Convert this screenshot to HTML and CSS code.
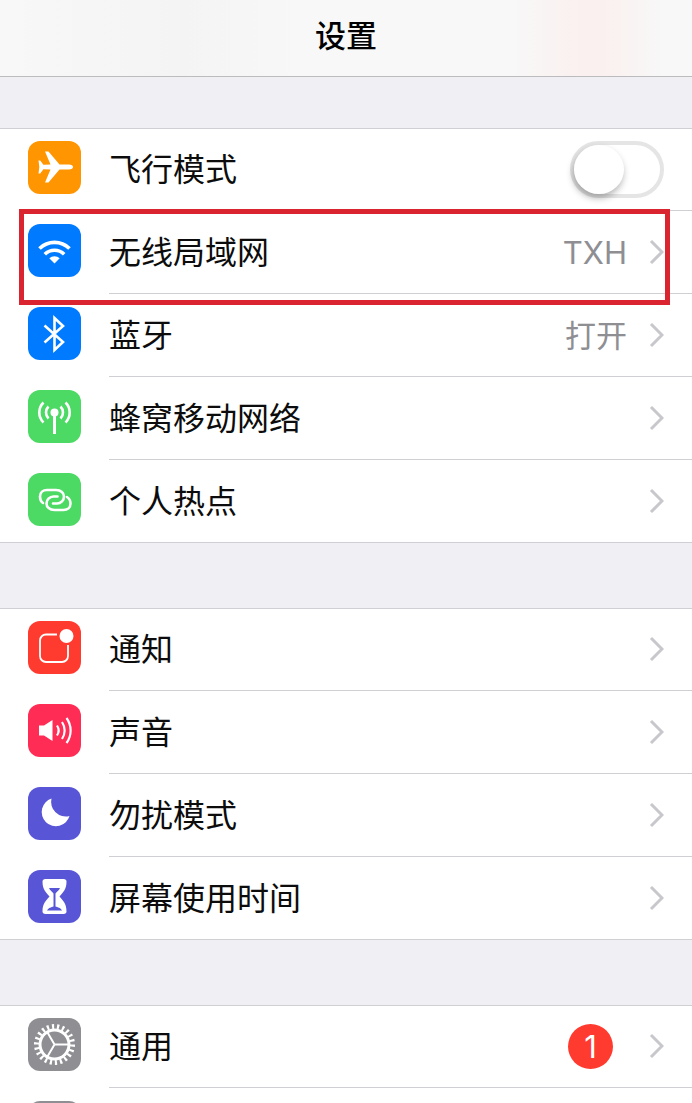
FILE: index.html
```html
<!DOCTYPE html>
<html lang="zh-CN">

<head>
    <meta charset="UTF-8">
    <meta name="viewport" content="width=device-width, initial-scale=1.0">
    <title>设置</title>
    <link rel="stylesheet" href="styles.css">
</head>

<body>
    <div class="screen">
        <header class="navbar">
            <h1>设置</h1>
        </header>

        <main class="settings">
            <!-- Network -->
            <section class="group">
                <div class="row">
                    <svg class="icon orange" viewBox="0 0 53 53" aria-hidden="true">
                        <path fill="#fff" d="M45 26c0 1.300-1.400 2.400-4 2.400h-9.500L20.500 41.500h-3.500L22.500 28.500l-7.100-.3-3.200 4.300h-1.700l.8-6.500-.8-6.500h1.700l3.200 4.300 7.100-.3L17 10.500h3.500L31.500 23.600H41c2.600 0 4 1.100 4 2.400z"/>
                    </svg>
                    <div class="row-body">
                        <label class="label" for="airplane">飞行模式</label>
                        <input class="switch" type="checkbox" role="switch" id="airplane">
                    </div>
                </div>
                <a class="row highlight" href="#wifi">
                    <svg class="icon blue" viewBox="0 0 53 53" aria-hidden="true">
                        <g fill="none" stroke="#fff" stroke-width="3.600">
                            <path d="M11.500 24.500a21.500 21.500 0 0 1 30 0"/>
                            <path d="M16.800 30.200a13.800 13.800 0 0 1 19.400 0"/>
                        </g>
                        <path fill="#fff" d="M21.300 34.300a7.600 7.600 0 0 1 10.400 0L26.500 39.500z"/>
                    </svg>
                    <span class="row-body">
                        <span class="label">无线局域网</span>
                        <span class="value">TXH</span>
                        <svg class="chevron" viewBox="0 0 15 26" aria-hidden="true"><path d="M2 2l11 11L2 24"/></svg>
                    </span>
                </a>
                <a class="row" href="#bluetooth">
                    <svg class="icon blue" viewBox="0 0 53 53" aria-hidden="true">
                        <path fill="none" stroke="#fff" stroke-width="2.600" d="M16.500 18.500L35 35l-8.500 8V11l8.500 8-18.500 16.500"/>
                    </svg>
                    <span class="row-body">
                        <span class="label">蓝牙</span>
                        <span class="value">打开</span>
                        <svg class="chevron" viewBox="0 0 15 26" aria-hidden="true"><path d="M2 2l11 11L2 24"/></svg>
                    </span>
                </a>
                <a class="row" href="#cellular">
                    <svg class="icon green" viewBox="0 0 53 53" aria-hidden="true">
                        <circle cx="26.500" cy="22.500" r="4" fill="#fff"/>
                        <g fill="none" stroke="#fff" stroke-width="2.600">
                            <path stroke-width="3" d="M26.500 24v20"/>
                            <path d="M20.500 16.500a8.500 8.500 0 0 0 0 12M32.500 16.500a8.500 8.500 0 0 1 0 12"/>
                            <path d="M15.500 12.500a14 14 0 0 0 0 20M37.500 12.500a14 14 0 0 1 0 20"/>
                        </g>
                    </svg>
                    <span class="row-body">
                        <span class="label">蜂窝移动网络</span>
                        <svg class="chevron" viewBox="0 0 15 26" aria-hidden="true"><path d="M2 2l11 11L2 24"/></svg>
                    </span>
                </a>
                <a class="row" href="#hotspot">
                    <svg class="icon green" viewBox="0 0 53 53" aria-hidden="true">
                        <g fill="none" stroke="#fff" stroke-width="2.600" stroke-linecap="round">
                            <path d="M15 30c-2.500-1.500-3-4-3-6.500 0-4 3-6.500 7-6.500h9c5 0 8 3 8 6.500S33 30.500 29 30.500h-4"/>
                            <path d="M39 24c2.500 1.500 3.500 4 3.500 6.500 0 4-3 6.500-7 6.500h-9c-5 0-8-3-8-6.500S21.500 23.500 25.500 23.500h4"/>
                        </g>
                    </svg>
                    <span class="row-body">
                        <span class="label">个人热点</span>
                        <svg class="chevron" viewBox="0 0 15 26" aria-hidden="true"><path d="M2 2l11 11L2 24"/></svg>
                    </span>
                </a>
            </section>

            <!-- Alerts -->
            <section class="group">
                <a class="row" href="#notifications">
                    <svg class="icon red" viewBox="0 0 53 53" aria-hidden="true">
                        <path fill="none" stroke="#fff" stroke-width="1.800" d="M29 13.500H18a6 6 0 0 0-6 6V35a6 6 0 0 0 6 6h16a6 6 0 0 0 6-6V24"/>
                        <circle cx="38.500" cy="15" r="7" fill="#fff"/>
                    </svg>
                    <span class="row-body">
                        <span class="label">通知</span>
                        <svg class="chevron" viewBox="0 0 15 26" aria-hidden="true"><path d="M2 2l11 11L2 24"/></svg>
                    </span>
                </a>
                <a class="row" href="#sounds">
                    <svg class="icon pink" viewBox="0 0 53 53" aria-hidden="true">
                        <path fill="#fff" d="M11 21.500h5l8.500-5.500v21L16 31.500h-5z"/>
                        <g fill="none" stroke="#fff" stroke-width="2.200">
                            <path d="M29 21.500a9 9 0 0 1 0 10"/>
                            <path d="M34 18a15 15 0 0 1 0 17"/>
                            <path d="M38.500 14a21 21 0 0 1 0 25"/>
                        </g>
                    </svg>
                    <span class="row-body">
                        <span class="label">声音</span>
                        <svg class="chevron" viewBox="0 0 15 26" aria-hidden="true"><path d="M2 2l11 11L2 24"/></svg>
                    </span>
                </a>
                <a class="row" href="#dnd">
                    <svg class="icon purple" viewBox="0 0 53 53" aria-hidden="true">
                        <path fill="#fff" d="M23.500 11.500A14.200 14.200 0 1 0 41.500 29 14.600 14.600 0 0 1 23.500 11.500z"/>
                    </svg>
                    <span class="row-body">
                        <span class="label">勿扰模式</span>
                        <svg class="chevron" viewBox="0 0 15 26" aria-hidden="true"><path d="M2 2l11 11L2 24"/></svg>
                    </span>
                </a>
                <a class="row" href="#screentime">
                    <svg class="icon purple" viewBox="0 0 53 53" aria-hidden="true">
                        <path fill="#fff" d="M17.500 9h18c2 0 3 1 3 2.500C38.500 20 35 22 31.500 26.500 35 31 38.500 33 38.500 41.500c0 1.500-1 2.500-3 2.500h-18c-2 0-3-1-3-2.500 0-8.500 3.500-10.500 7-15-3.500-4.500-7-6.500-7-15C14.500 10 15.500 9 17.500 9z"/>
                        <path fill="#5856d6" d="M21 18h11c-1 2.500-3.300 3.800-4.500 5.500v13c2 .8 5.500 1.500 6.500 4H19c1-2.500 4.500-3.200 6.500-4v-13C24.300 21.800 22 20.500 21 18z"/>
                    </svg>
                    <span class="row-body">
                        <span class="label">屏幕使用时间</span>
                        <svg class="chevron" viewBox="0 0 15 26" aria-hidden="true"><path d="M2 2l11 11L2 24"/></svg>
                    </span>
                </a>
            </section>

            <!-- System -->
            <section class="group">
                <a class="row" href="#general">
                    <svg class="icon gray" viewBox="0 0 53 53" aria-hidden="true">
                        <g fill="none" stroke="#fff">
                            <circle cx="26.500" cy="26.500" r="14.500" stroke-width="3"/>
                            <circle cx="26.500" cy="26.500" r="18" stroke-width="5" pathLength="88" stroke-dasharray="1.700 2.300"/>
                            <path stroke-width="2" d="M26.500 26.500H41M26.500 26.500L19.200 14M26.500 26.500L19.200 39"/>
                        </g>
                    </svg>
                    <span class="row-body">
                        <span class="label">通用</span>
                        <span class="badge">1</span>
                        <svg class="chevron" viewBox="0 0 15 26" aria-hidden="true"><path d="M2 2l11 11L2 24"/></svg>
                    </span>
                </a>
                <div class="row">
                    <svg class="icon gray" viewBox="0 0 53 53" aria-hidden="true"></svg>
                    <div class="row-body"></div>
                </div>
            </section>
        </main>
    </div>
</body>

</html>
```
FILE: styles.css
```css
* {
    box-sizing: border-box;
}

body {
    margin: 0;
    font-family: Inter, "Noto Sans CJK SC", sans-serif;
    background-color: #efeff4;
    color: #0c0c0c;
}

.screen {
    height: 100vh;
    overflow: hidden;
}

.navbar {
    display: flex;
    justify-content: center;
    align-items: center;
    height: 77px;
    padding-bottom: 4px;
    border-bottom: 1px solid #bcbcbf;
    background-color: #f8f8f8;
    background-image: linear-gradient(to right, transparent 74%, #faf0ef 84%, #faf0ef 87%, transparent 96%),
        linear-gradient(to right, #f8f8f8, #f4f4f4 26%, #f8f8f8 44%);
}

.navbar h1 {
    margin: 0;
    font-size: 31px;
    font-weight: 500;
    line-height: 40px;
    color: #000;
}

.settings {
    display: flex;
    flex-direction: column;
    gap: 65px;
    padding-top: 51px;
}

.group {
    background-color: #fff;
    box-shadow: inset 0 1px #d0d0d4, inset 0 -1px #d0d0d4;
}

.row {
    display: flex;
    align-items: center;
    gap: 28px;
    height: 83px;
    padding-left: 28px;
    color: inherit;
    text-decoration: none;
}

.icon {
    flex: none;
    width: 53px;
    height: 53px;
    margin-bottom: 4px;
    border-radius: 12px;
}

.orange {
    background-color: #ff9500;
}

.blue {
    background-color: #007aff;
}

.green {
    background-color: #4cd964;
}

.red {
    background-color: #ff3b30;
}

.pink {
    background-color: #ff2d55;
}

.purple {
    background-color: #5856d6;
}

.gray {
    background-color: #8e8e93;
}

.row-body {
    display: flex;
    flex: 1;
    align-items: center;
    height: 100%;
    padding-right: 28px;
    border-bottom: 1px solid #d0d0d4;
}

.label {
    flex: 1;
    padding-top: 2px;
    font-size: 32px;
    line-height: 40px;
}

.value {
    padding-top: 2px;
    font-size: 31px;
    line-height: 40px;
    color: #8e8e93;
}

.chevron {
    width: 15px;
    height: 26px;
    margin-left: 22px;
    fill: none;
    stroke: #c7c7cc;
    stroke-width: 3px;
}

.switch {
    appearance: none;
    width: 94px;
    height: 57px;
    margin: 0;
    border: 4px solid #e5e5e5;
    border-radius: 29px;
    background-color: #fff;
}

.switch::before {
    content: "";
    display: block;
    width: 50px;
    height: 49px;
    border-radius: 50%;
    background-color: #fff;
    box-shadow: -1px 4px 7px rgba(0, 0, 0, 0.3);
}

.switch:checked {
    border-color: #4cd964;
    background-color: #4cd964;
}

.switch:checked::before {
    margin-left: auto;
}

.badge {
    width: 45px;
    height: 45px;
    margin-right: 14px;
    border-radius: 50%;
    background-color: #ff3b30;
    color: #fff;
    font-size: 31px;
    line-height: 45px;
    text-align: center;
}

/* red frame around the Wi-Fi row */
.highlight {
    position: relative;
}

.highlight::after {
    content: "";
    position: absolute;
    top: -2px;
    right: 22px;
    bottom: -11px;
    left: 19px;
    z-index: 1;
    border: 5px solid #da2430;
    pointer-events: none;
}
```
